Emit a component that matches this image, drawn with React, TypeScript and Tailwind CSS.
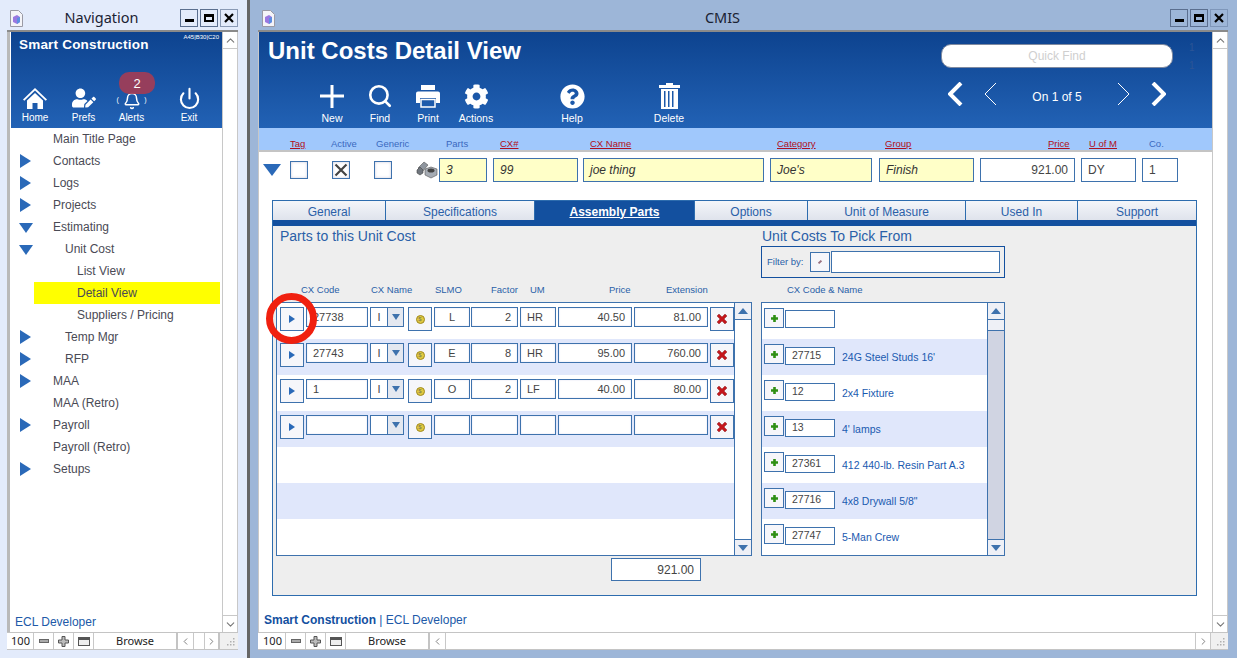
import { Bell, ChevronDown, ChevronLeft, ChevronRight, ChevronUp, Power, Search } from "lucide-react";
import { FaCog, FaQuestionCircle, FaUserEdit } from "react-icons/fa";
import type { ReactNode } from "react";

const sans = "font-['Liberation_Sans',Arial,sans-serif]";
const ui = "font-['Noto_Sans',sans-serif]";

const navItems = [
  { label: "Main Title Page", indent: "pl-[42px]" },
  { label: "Contacts", indent: "pl-[42px]", arrow: "right", arrowPos: "left-[9px]" },
  { label: "Logs", indent: "pl-[42px]", arrow: "right", arrowPos: "left-[9px]" },
  { label: "Projects", indent: "pl-[42px]", arrow: "right", arrowPos: "left-[9px]" },
  { label: "Estimating", indent: "pl-[42px]", arrow: "down", arrowPos: "left-[8px]" },
  { label: "Unit Cost", indent: "pl-[54px]", arrow: "down", arrowPos: "left-[8px]" },
  { label: "List View", indent: "pl-[66px]" },
  { label: "Detail View", indent: "pl-[66px]", active: true },
  { label: "Suppliers / Pricing", indent: "pl-[66px]" },
  { label: "Temp Mgr", indent: "pl-[54px]", arrow: "right", arrowPos: "left-[9px]" },
  { label: "RFP", indent: "pl-[54px]", arrow: "right", arrowPos: "left-[9px]" },
  { label: "MAA", indent: "pl-[42px]", arrow: "right", arrowPos: "left-[9px]" },
  { label: "MAA (Retro)", indent: "pl-[42px]" },
  { label: "Payroll", indent: "pl-[42px]", arrow: "right", arrowPos: "left-[9px]" },
  { label: "Payroll (Retro)", indent: "pl-[42px]" },
  { label: "Setups", indent: "pl-[42px]", arrow: "right", arrowPos: "left-[9px]" },
];

const tabs = [
  { label: "General", w: "w-[113px]" },
  { label: "Specifications", w: "w-[149px]" },
  { label: "Assembly Parts", w: "w-[160px]", active: true },
  { label: "Options", w: "w-[113px]" },
  { label: "Unit of Measure", w: "w-[158px]" },
  { label: "Used In", w: "w-[112px]" },
  { label: "Support", w: "w-[119px]" },
];

const parts = [
  { code: "27738", name: "I", slmo: "L", factor: "2", um: "HR", price: "40.50", ext: "81.00" },
  { code: "27743", name: "I", slmo: "E", factor: "8", um: "HR", price: "95.00", ext: "760.00" },
  { code: "1", name: "I", slmo: "O", factor: "2", um: "LF", price: "40.00", ext: "80.00" },
  { code: "", name: "", slmo: "", factor: "", um: "", price: "", ext: "" },
];

const picks = [
  { code: "", name: "" },
  { code: "27715", name: "24G Steel Studs 16'" },
  { code: "12", name: "2x4 Fixture" },
  { code: "13", name: "4' lamps" },
  { code: "27361", name: "412 440-lb. Resin Part A.3" },
  { code: "27716", name: "4x8 Drywall 5/8\"" },
  { code: "27747", name: "5-Man Crew" },
];

function DocIcon() {
  return (
    <svg width="13" height="17" viewBox="0 0 13 17" className="shrink-0">
      <path d="M.5.5h8l4 4v12H.5z" fill="#f4f4f8" stroke="#9a9aa5" />
      <path d="M3 7l4-2 3 2v5l-3 2-4-2z" fill="#9a78e0" />
      <path d="M7 8l3-1v5l-3 2z" fill="#5c8fe0" />
    </svg>
  );
}

function WinButtons({ dim }: { dim?: boolean }) {
  return (
    <div className="flex gap-[2px]">
      <div className="flex h-[18px] w-[18px] items-end justify-center border border-[#5b6f8f] pb-[4px]">
        <div className="h-[3px] w-[9px] bg-black" />
      </div>
      <div className="flex h-[18px] w-[18px] items-center justify-center border border-[#5b6f8f]">
        <div className="h-[8px] w-[10px] border-2 border-black border-t-[3px]" />
      </div>
      <div className={`flex h-[18px] w-[18px] items-center justify-center border ${dim ? "border-[#7f97ba]" : "border-[#8a9ab5]"}`}>
        <svg width="10" height="10" viewBox="0 0 10 10">
          <path d="M1 1l8 8M9 1l-8 8" stroke="#000" strokeWidth="2.2" />
        </svg>
      </div>
    </div>
  );
}

function StatusBar({ grow }: { grow?: boolean }) {
  const cell = "flex h-full w-[20px] items-center justify-center border-r border-[#c8c8c8]";
  return (
    <div className={`${ui} flex h-[18px] items-stretch border-y border-[#c4c4c4] bg-white text-[11px] text-[#222] ${grow ? "pl-[1px]" : ""}`}>
      <div className="flex w-[27px] items-center justify-center border-r border-[#c8c8c8] pl-[1px] pt-[1px]">100</div>
      <div className={cell}><div className="h-[4px] w-[10px] border border-[#666] bg-[#aaa]" /></div>
      <div className={cell}>
        <svg width="11" height="11" viewBox="0 0 11 11"><path d="M4 .5h3v3.500h3.500v3H7v3.500H4V7H.5V4H4z" fill="#bbb" stroke="#555" /></svg>
      </div>
      <div className={cell}><div className="h-[9px] w-[12px] border border-[#555] border-t-[3px] bg-[#eee]" /></div>
      <div className="flex w-[84px] items-center justify-center border-r-2 border-[#c4c4c4] pt-[1px]">Browse</div>
      <div className="flex w-[16px] items-center justify-center border-r border-[#c8c8c8]"><ChevronLeft size={11} color="#777" /></div>
      {grow ? (
        <>
          <div className="flex-1 border-r border-[#c8c8c8]" />
          <div className="flex w-[15px] items-center justify-center border-r border-[#c8c8c8]"><ChevronRight size={11} color="#777" /></div>
        </>
      ) : (
        <>
          <div className="w-[11px] border-r border-[#c8c8c8]" />
          <div className="flex w-[15px] items-center justify-center border-r-2 border-[#c4c4c4]"><ChevronRight size={11} color="#777" /></div>
        </>
      )}
      <div className={`flex items-end justify-end bg-[#f0f0f0] p-[3px] ${grow ? "w-[17px]" : "flex-1"}`}>
        <svg width="8" height="8" viewBox="0 0 8 8" fill="#b0b0b0">
          <rect x="6" y="0" width="1.500" height="1.500" /><rect x="3" y="3" width="1.500" height="1.500" /><rect x="6" y="3" width="1.500" height="1.500" />
          <rect x="0" y="6" width="1.500" height="1.500" /><rect x="3" y="6" width="1.500" height="1.500" /><rect x="6" y="6" width="1.500" height="1.500" />
        </svg>
      </div>
    </div>
  );
}

function VScroll() {
  return (
    <div className="flex w-[16px] shrink-0 flex-col justify-between border-x border-[#c8c8c8] bg-white">
      <div className="flex h-[17px] items-center justify-center border-b border-[#c8c8c8]"><ChevronUp size={13} color="#777" /></div>
      <div className="flex h-[17px] items-center justify-center border-t border-[#c8c8c8]"><ChevronDown size={13} color="#777" /></div>
    </div>
  );
}

function NavWindow() {
  return (
    <div className="flex h-full w-[247px] shrink-0 flex-col bg-[#e3ebfb] pl-[7px] pr-[9px]">
      <div className="flex h-[30px] shrink-0 items-end pb-[3px] pl-[3px]">
        <DocIcon />
        <div className={`${ui} flex-1 text-center text-[14.500px] leading-[20px] text-[#1a2233]`}>Navigation</div>
        <WinButtons />
      </div>
      <div className="flex min-h-0 flex-1 flex-col border-t-2 border-[#8a8a8a] bg-white">
        <div className="flex min-h-0 flex-1 border-l-[3px] border-[#b9b9b9]">
          <div className={`${sans} flex min-w-0 flex-1 flex-col border-l border-white`}>
            <div className="relative h-[96px] shrink-0 bg-linear-to-b from-[#0d438f] to-[#2262b5] text-white">
              <div className="flex justify-between pl-[8px] pr-[3px]">
                <div className="pt-[5px] text-[13.500px] font-bold leading-[16px] tracking-[0.2px]">Smart Construction</div>
                <div className="pt-[1px] text-[6px] leading-[8px]">A45|B30|C20</div>
              </div>
              <div className="absolute inset-x-0 bottom-[2px] flex h-[43px] text-[10px]">
                <ToolItem w="w-[48px]" label="Home">
                  <svg width="24" height="22" viewBox="0 0 24 22" fill="#fff"><path d="M12 0L0 11.500l1.300 1.300L12 2.500l10.700 10.300 1.300-1.300z" /><path d="M4 12.500L12 5l8 7.500V21h-5.500v-6h-5v6H4z" /></svg>
                </ToolItem>
                <ToolItem w="w-[49px]" label="Prefs"><FaUserEdit size={24} /></ToolItem>
                <ToolItem w="w-[47px]" label="Alerts">
                  <div className="relative flex items-center justify-center">
                    <Bell size={18} strokeWidth={2} />
                    <span className="absolute left-[-6px] top-[4px] text-[7px] leading-[8px]">(</span>
                    <span className="absolute right-[-6px] top-[4px] text-[7px] leading-[8px]">)</span>
                  </div>
                </ToolItem>
                <ToolItem w="w-[68px]" label="Exit"><Power size={23} strokeWidth={2.200} /></ToolItem>
              </div>
              <div className="absolute left-[108px] top-[40px] flex h-[22px] w-[36px] items-center justify-center rounded-[10px] bg-[#a43c54]/90 text-[13px] leading-none text-white">2</div>
            </div>
            <div className="flex-1 bg-white">
              {navItems.map((item) => (
                <div key={item.label} className={`relative flex h-[22px] items-center text-[12px] text-[#4a4a55] ${item.indent}`}>
                  {item.active && <div className="absolute inset-y-0 left-[23px] right-[2px] bg-[#ffff00]" />}
                  {item.arrow === "right" && (
                    <div className={`absolute top-[4px] h-0 w-0 border-y-[7px] border-l-[11px] border-y-transparent border-l-[#2a69b8] ${item.arrowPos}`} />
                  )}
                  {item.arrow === "down" && (
                    <div className={`absolute top-[7px] h-0 w-0 border-x-[7px] border-t-[10px] border-x-transparent border-t-[#2a69b8] ${item.arrowPos}`} />
                  )}
                  <span className="relative">{item.label}</span>
                </div>
              ))}
            </div>
            <div className="h-[21px] shrink-0 pl-[4px] pt-[1px] text-[12px] leading-[20px] text-[#2059a8]">ECL Developer</div>
          </div>
          <VScroll />
        </div>
        <StatusBar />
      </div>
      <div className="h-[8px] shrink-0" />
    </div>
  );
}

function ToolItem({ w, label, children }: { w: string; label: string; children: ReactNode }) {
  return (
    <div className={`${w} flex shrink-0 flex-col items-center justify-end`}>
      <div className="flex h-[26px] items-end justify-center">{children}</div>
      <div className="h-[16px] leading-[15px]">{label}</div>
    </div>
  );
}

function TopLabel({ w, text, red }: { w: string; text: string; red?: boolean }) {
  return (
    <div className={`${w} shrink-0 text-[9.500px] leading-[12px] ${red ? "text-[#b01020] underline" : "text-[#3a68c0]"}`}>{text}</div>
  );
}

function Yellow({ w, text, ml }: { w: string; text: string; ml: string }) {
  return (
    <div className={`${w} ${ml} flex h-[24px] shrink-0 items-center border border-[#3e72ad] bg-[#ffffc8] pl-[6px] text-[12px] italic text-[#333]`}>{text}</div>
  );
}

function Plain({ w, text, ml, right }: { w: string; text: string; ml: string; right?: boolean }) {
  return (
    <div className={`${w} ${ml} flex h-[24px] shrink-0 items-center border border-[#3e72ad] bg-white px-[6px] text-[12px] text-[#444] ${right ? "justify-end" : ""}`}>{text}</div>
  );
}

function Check({ ml, x }: { ml: string; x?: boolean }) {
  return (
    <div className={`${ml} flex h-[18px] w-[18px] shrink-0 items-center justify-center border border-[#3e72ad] bg-white shadow-[inset_0_0_3px_#ccd]`}>
      {x && (
        <svg width="14" height="14" viewBox="0 0 14 14"><path d="M1.500 1.500l11 11M12.500 1.500l-11 11" stroke="#444" strokeWidth="2.200" /></svg>
      )}
    </div>
  );
}

function Bolts() {
  return (
    <svg width="23" height="18" viewBox="0 0 23 18" className="ml-[24px] shrink-0">
      <path d="M2 7l6-6 4 3-6 7z" fill="#8e959e" stroke="#555" strokeWidth=".6" />
      <path d="M1 9l3-3 3 3v3l-3 2-3-2z" fill="#70767e" stroke="#444" strokeWidth=".6" />
      <path d="M9 8l6-2 6 2v6l-6 3-6-3z" fill="#a5abb3" stroke="#555" strokeWidth=".6" />
      <ellipse cx="15" cy="9.500" rx="3.500" ry="2" fill="#444" />
    </svg>
  );
}

function Cell({ w, ml, text, right, center }: { w: string; ml: string; text?: string; right?: boolean; center?: boolean }) {
  return (
    <div className={`${w} ${ml} flex h-[20px] shrink-0 items-center border border-[#3e72ad] bg-white px-[6px] text-[11px] text-[#444] shadow-[inset_0_0_2px_#dde] ${right ? "justify-end" : ""} ${center ? "justify-center" : ""}`}>{text}</div>
  );
}

function IconBox({ w, ml, children }: { w: string; ml: string; children: ReactNode }) {
  return (
    <div className={`${w} ${ml} flex h-[24px] shrink-0 items-center justify-center border border-[#3e72ad] bg-[#f6f6fa]`}>{children}</div>
  );
}

function PartRow({ row, shaded }: { row: (typeof parts)[number]; shaded: boolean }) {
  return (
    <div className={`flex h-[36px] items-start pl-[3px] pt-[4px] ${shaded ? "bg-[#e0e7fb]" : "bg-white"}`}>
      <IconBox w="w-[24px]" ml="ml-0">
        <div className="h-0 w-0 border-y-[4px] border-l-[6px] border-y-transparent border-l-[#2a69b8]" />
      </IconBox>
      <Cell w="w-[62px]" ml="ml-[2px]" text={row.code} />
      <div className="ml-[2px] flex h-[20px] w-[34px] shrink-0 border border-[#3e72ad] bg-white text-[11px] text-[#444]">
        <div className="flex w-[17px] items-center justify-center border-r border-[#3e72ad]">{row.name}</div>
        <div className="flex flex-1 items-center justify-center bg-[#e4e8f0]">
          <div className="h-0 w-0 border-x-[4px] border-t-[6px] border-x-transparent border-t-[#3e72ad]" />
        </div>
      </div>
      <IconBox w="w-[24px]" ml="ml-[4px]">
        <div className="flex h-[9px] w-[9px] items-center justify-center rounded-full border border-[#a08a20] bg-[#e0c840] text-[6px] leading-none text-[#775]">$</div>
      </IconBox>
      <Cell w="w-[36px]" ml="ml-[2px]" text={row.slmo} center />
      <Cell w="w-[47px]" ml="ml-[1px]" text={row.factor} right />
      <Cell w="w-[36px]" ml="ml-[2px]" text={row.um} />
      <Cell w="w-[74px]" ml="ml-[2px]" text={row.price} right />
      <Cell w="w-[74px]" ml="ml-[2px]" text={row.ext} right />
      <IconBox w="w-[24px]" ml="ml-[2px]">
        <svg width="12" height="12" viewBox="0 0 12 12"><path d="M1 3l2-2 3 3 3-3 2 2-3 3 3 3-2 2-3-3-3 3-2-2 3-3z" fill="#c4161c" stroke="#8f2a2a" strokeWidth=".5" /></svg>
      </IconBox>
    </div>
  );
}

function PickRow({ row, shaded, first }: { row: (typeof picks)[number]; shaded: boolean; first: boolean }) {
  return (
    <div className={`flex h-[36px] items-start pl-[2px] pt-[5px] ${shaded ? "bg-[#e0e7fb]" : "bg-white"}`}>
      <div className="flex h-[20px] w-[20px] shrink-0 items-center justify-center border border-[#3e72ad] bg-[#f6f6fa]">
        <svg width="7" height="7" viewBox="0 0 8 8"><path d="M2.500 0h3v2.500H8v3H5.500V8h-3V5.500H0v-3h2.500z" fill="#2f8f14" /></svg>
      </div>
      <div className={`ml-[1px] flex h-[18px] w-[50px] shrink-0 items-center border border-[#3e72ad] bg-white pl-[6px] text-[10.500px] text-[#444] ${first ? "mt-[2px]" : "mt-[3px]"}`}>{row.code}</div>
      <div className="ml-[7px] mt-[7px] text-[10.500px] leading-[12px] text-[#1a5ab0]">{row.name}</div>
    </div>
  );
}

function PortalScroll({ thumb }: { thumb?: boolean }) {
  return (
    <div className={`flex w-[17px] shrink-0 flex-col border-l border-[#3e72ad] ${thumb ? "bg-[#d0d4e2]" : "bg-white"}`}>
      <div className="flex h-[17px] shrink-0 items-center justify-center border-b border-[#3e72ad] bg-[#eef0f6]">
        <div className="h-0 w-0 border-x-[5px] border-b-[6px] border-x-transparent border-b-[#3e72ad]" />
      </div>
      {thumb && <div className="h-[11px] shrink-0 border-b border-[#3e72ad] bg-[#eef0f6]" />}
      <div className="flex-1" />
      <div className="flex h-[16px] shrink-0 items-center justify-center border-t border-[#3e72ad] bg-[#eef0f6]">
        <div className="h-0 w-0 border-x-[5px] border-t-[6px] border-x-transparent border-t-[#3e72ad]" />
      </div>
    </div>
  );
}

function HeadLabel({ w, text }: { w: string; text: string }) {
  return <div className={`${w} shrink-0 text-[9.500px] leading-[12px] text-[#2a5fa8]`}>{text}</div>;
}

function TabPanel() {
  return (
    <div className="ml-[13px] flex h-[396px] w-[925px] flex-col border border-[#2d6cae] bg-[#eeeeee]">
      <div className="flex h-[19px] shrink-0 bg-white">
        {tabs.map((tab) => (
          <div
            key={tab.label}
            className={`${tab.w} flex shrink-0 items-center justify-center border-r border-[#2d6cae] pt-[2px] text-[12px] ${
              tab.active ? "bg-[#13509f] font-bold text-white underline" : "bg-linear-to-b from-[#f4f6fa] to-[#dfe3ec] text-[#2a5fa8]"
            }`}
          >
            {tab.label}
          </div>
        ))}
      </div>
      <div className="h-[6px] shrink-0 bg-[#13509f]" />
      <div className="flex flex-1 pl-[3px]">
        <div className="w-[476px] shrink-0">
          <div className="h-[20px] pl-[4px] text-[14px] leading-[21px] text-[#2a5fa8]">Parts to this Unit Cost</div>
          <div className="flex h-[56px] items-end pb-[6px] pl-[25px]">
            <HeadLabel w="w-[70px]" text="CX Code" />
            <HeadLabel w="w-[64px]" text="CX Name" />
            <HeadLabel w="w-[56px]" text="SLMO" />
            <HeadLabel w="w-[39px]" text="Factor" />
            <HeadLabel w="w-[79px]" text="UM" />
            <HeadLabel w="w-[57px]" text="Price" />
            <HeadLabel w="w-[60px]" text="Extension" />
          </div>
          <div className="flex h-[254px] border border-[#3e72ad] bg-white">
            <div className="min-w-0 flex-1 overflow-hidden">
              {[0, 1, 2, 3].map((i) => <PartRow key={i} row={parts[i]} shaded={i % 2 === 1} />)}
              <div className="h-[36px] bg-white" />
              <div className="h-[36px] bg-[#e0e7fb]" />
            </div>
            <PortalScroll />
          </div>
          <div className="ml-[335px] mt-[2px] flex h-[23px] w-[90px] items-center justify-end border border-[#3e72ad] bg-white px-[6px] text-[12px] text-[#444]">921.00</div>
        </div>
        <div className="ml-[9px] w-[244px] shrink-0">
          <div className="h-[20px] pl-[1px] text-[14px] leading-[21px] text-[#2a5fa8]">Unit Costs To Pick From</div>
          <div className="flex h-[32px] items-center border border-[#13509f] pl-[5px]">
            <span className="w-[43px] shrink-0 text-[9.500px] text-[#2a5fa8]">Filter by:</span>
            <div className="flex h-[20px] w-[20px] shrink-0 items-center justify-center border border-[#3e72ad] bg-[#f6f6fa]">
              <div className="h-[2px] w-[4px] -rotate-45 bg-[#99707f]" />
            </div>
            <div className="ml-[1px] h-[22px] w-[169px] border border-[#3e72ad] bg-white" />
          </div>
          <div className="flex h-[24px] items-end pb-[6px] pl-[26px]">
            <HeadLabel w="w-[120px]" text="CX Code & Name" />
          </div>
          <div className="flex h-[254px] border border-[#3e72ad] bg-white">
            <div className="min-w-0 flex-1 overflow-hidden">
              {picks.map((row, i) => <PickRow key={i} row={row} shaded={i % 2 === 1} first={i === 0} />)}
            </div>
            <PortalScroll thumb />
          </div>
        </div>
      </div>
    </div>
  );
}

function Chevron({ dir, bold }: { dir: "left" | "right"; bold?: boolean }) {
  const d = dir === "left" ? "M13 1L2 12l11 11" : "M2 1l11 11L2 23";
  return (
    <svg width="15" height="24" viewBox="0 0 15 24" className="shrink-0">
      <path d={d} fill="none" stroke="#fff" strokeWidth={bold ? 4 : 1} />
    </svg>
  );
}

function MainWindow() {
  return (
    <div className="flex h-full min-w-0 flex-1 flex-col bg-[#9db6d8] pl-[8px] pr-[9px]">
      <div className="flex h-[30px] shrink-0 items-end pb-[3px] pl-[4px]">
        <DocIcon />
        <div className={`${ui} flex-1 text-center text-[14.500px] leading-[20px] text-[#1a2233]`}>CMIS</div>
        <WinButtons dim />
      </div>
      <div className="flex min-h-0 flex-1 flex-col border-t-2 border-[#8a8a8a] bg-white">
        <div className="flex min-h-0 flex-1 border-l border-[#c8c8c8]">
          <div className={`${sans} flex min-w-0 flex-1 flex-col`}>
            <div className="relative flex h-[96px] shrink-0 flex-col bg-linear-to-b from-[#0d438f] to-[#2262b5] text-white">
              <div className="pl-[9px] pt-[4px] text-[24px] font-bold leading-[30px]">Unit Costs Detail View</div>
              <div className="flex flex-1 items-end pl-[49px] text-[10.500px]">
                <MainTool w="w-[48px]" label="New">
                  <svg width="24" height="24" viewBox="0 0 24 24" fill="#fff"><path d="M10.500 1h3v9.500H24v3H13.500V24h-3V13.500H0v-3h10.500z" /></svg>
                </MainTool>
                <MainTool w="w-[48px]" label="Find"><Search size={26} strokeWidth={2.400} /></MainTool>
                <MainTool w="w-[48px]" label="Print">
                  <svg width="24" height="23" viewBox="0 0 24 23" fill="#fff">
                    <path d="M5 0h14v5H5zM2 6.500h20a2 2 0 0 1 2 2V18h-4v-5H4v5H0V8.500a2 2 0 0 1 2-2z" />
                    <path d="M5 14.500h14V22H5z" fill="none" stroke="#fff" strokeWidth="1.500" />
                  </svg>
                </MainTool>
                <MainTool w="w-[48px]" label="Actions"><FaCog size={25} /></MainTool>
                <div className="w-[48px]" />
                <MainTool w="w-[48px]" label="Help"><FaQuestionCircle size={25} /></MainTool>
                <div className="w-[49px]" />
                <MainTool w="w-[48px]" label="Delete">
                  <svg width="23" height="26" viewBox="0 0 23 26" fill="#fff"><path d="M8 0h7v2h7v3H1V2h7z" /><path d="M3 6h17v20H3zm3 2v16h1.500V8zm4 0v16h1.500V8zm4 0v16h1.500V8z" fillRule="evenodd" /></svg>
                </MainTool>
                <div className="mb-[22px] ml-[255px] flex h-[24px] w-[218px] items-center">
                  <Chevron dir="left" bold />
                  <div className="ml-[20px]"><Chevron dir="left" /></div>
                  <span className="flex-1 pt-[5px] text-center text-[12px]">On 1 of 5</span>
                  <Chevron dir="right" />
                  <div className="ml-[20px]"><Chevron dir="right" bold /></div>
                </div>
              </div>
              <div className="absolute left-[682px] top-[12px] flex h-[24px] w-[232px] items-center justify-center rounded-[10px] border border-[#7f8aa0] bg-white text-[12px] text-[#cfcfcf]">Quick Find</div>
              <div className="absolute left-[930px] top-[7px] text-[10px] leading-[18px] text-[#2c5596]">1<br />1</div>
            </div>
            <div className="flex h-[24px] shrink-0 items-end border-b-2 border-[#c4c4c4] bg-[#a0c8fc] pl-[31px]">
              <TopLabel w="w-[41px]" text="Tag" red />
              <TopLabel w="w-[45px]" text="Active" />
              <TopLabel w="w-[70px]" text="Generic" />
              <TopLabel w="w-[54px]" text="Parts" />
              <TopLabel w="w-[90px]" text="CX#" red />
              <TopLabel w="w-[187px]" text="CX Name" red />
              <TopLabel w="w-[108px]" text="Category" red />
              <TopLabel w="w-[163px]" text="Group" red />
              <TopLabel w="w-[41px]" text="Price" red />
              <TopLabel w="w-[60px]" text="U of M" red />
              <TopLabel w="w-[20px]" text="Co." />
            </div>
            <div className="flex h-[48px] shrink-0 items-start bg-white pl-[4px] pt-[6px]">
              <div className="mt-[6px] h-0 w-0 border-x-[9px] border-t-[12px] border-x-transparent border-t-[#2a69b8]" />
              <div className="flex items-center">
                <Check ml="ml-[9px]" />
                <Check ml="ml-[24px]" x />
                <Check ml="ml-[24px]" />
                <Bolts />
                <Yellow w="w-[48px]" text="3" ml="ml-0" />
                <Yellow w="w-[85px]" text="99" ml="ml-[6px]" />
                <Yellow w="w-[181px]" text="joe thing" ml="ml-[5px]" />
                <Yellow w="w-[102px]" text="Joe's" ml="ml-[6px]" />
                <Yellow w="w-[95px]" text="Finish" ml="ml-[7px]" />
                <Plain w="w-[95px]" text="921.00" ml="ml-[6px]" right />
                <Plain w="w-[55px]" text="DY" ml="ml-[6px]" />
                <Plain w="w-[36px]" text="1" ml="ml-[6px]" />
              </div>
            </div>
            <TabPanel />
            <div className="flex-1 pl-[5px] pt-[16px] text-[12px] leading-[16px] text-[#2059a8]">
              <span className="font-bold text-[#13509f]">Smart Construction</span> | ECL Developer
            </div>
          </div>
          <VScroll />
        </div>
        <StatusBar grow />
      </div>
      <div className="h-[8px] shrink-0" />
    </div>
  );
}

function MainTool({ w, label, children }: { w: string; label: string; children: ReactNode }) {
  return (
    <div className={`${w} flex shrink-0 flex-col items-center`}>
      <div className="flex h-[28px] items-center justify-center">{children}</div>
      <div className="h-[18px] pt-[1px] leading-[14px]">{label}</div>
    </div>
  );
}

export default function App() {
  return (
    <div className="relative flex h-[658px] w-[1237px] overflow-hidden">
      <NavWindow />
      <div className="w-[3px] shrink-0 bg-[#666]" />
      <MainWindow />
      <div className="absolute left-[266px] top-[293px] h-[51px] w-[51px] rounded-full border-[7px] border-[#f0200f]" />
    </div>
  );
}
